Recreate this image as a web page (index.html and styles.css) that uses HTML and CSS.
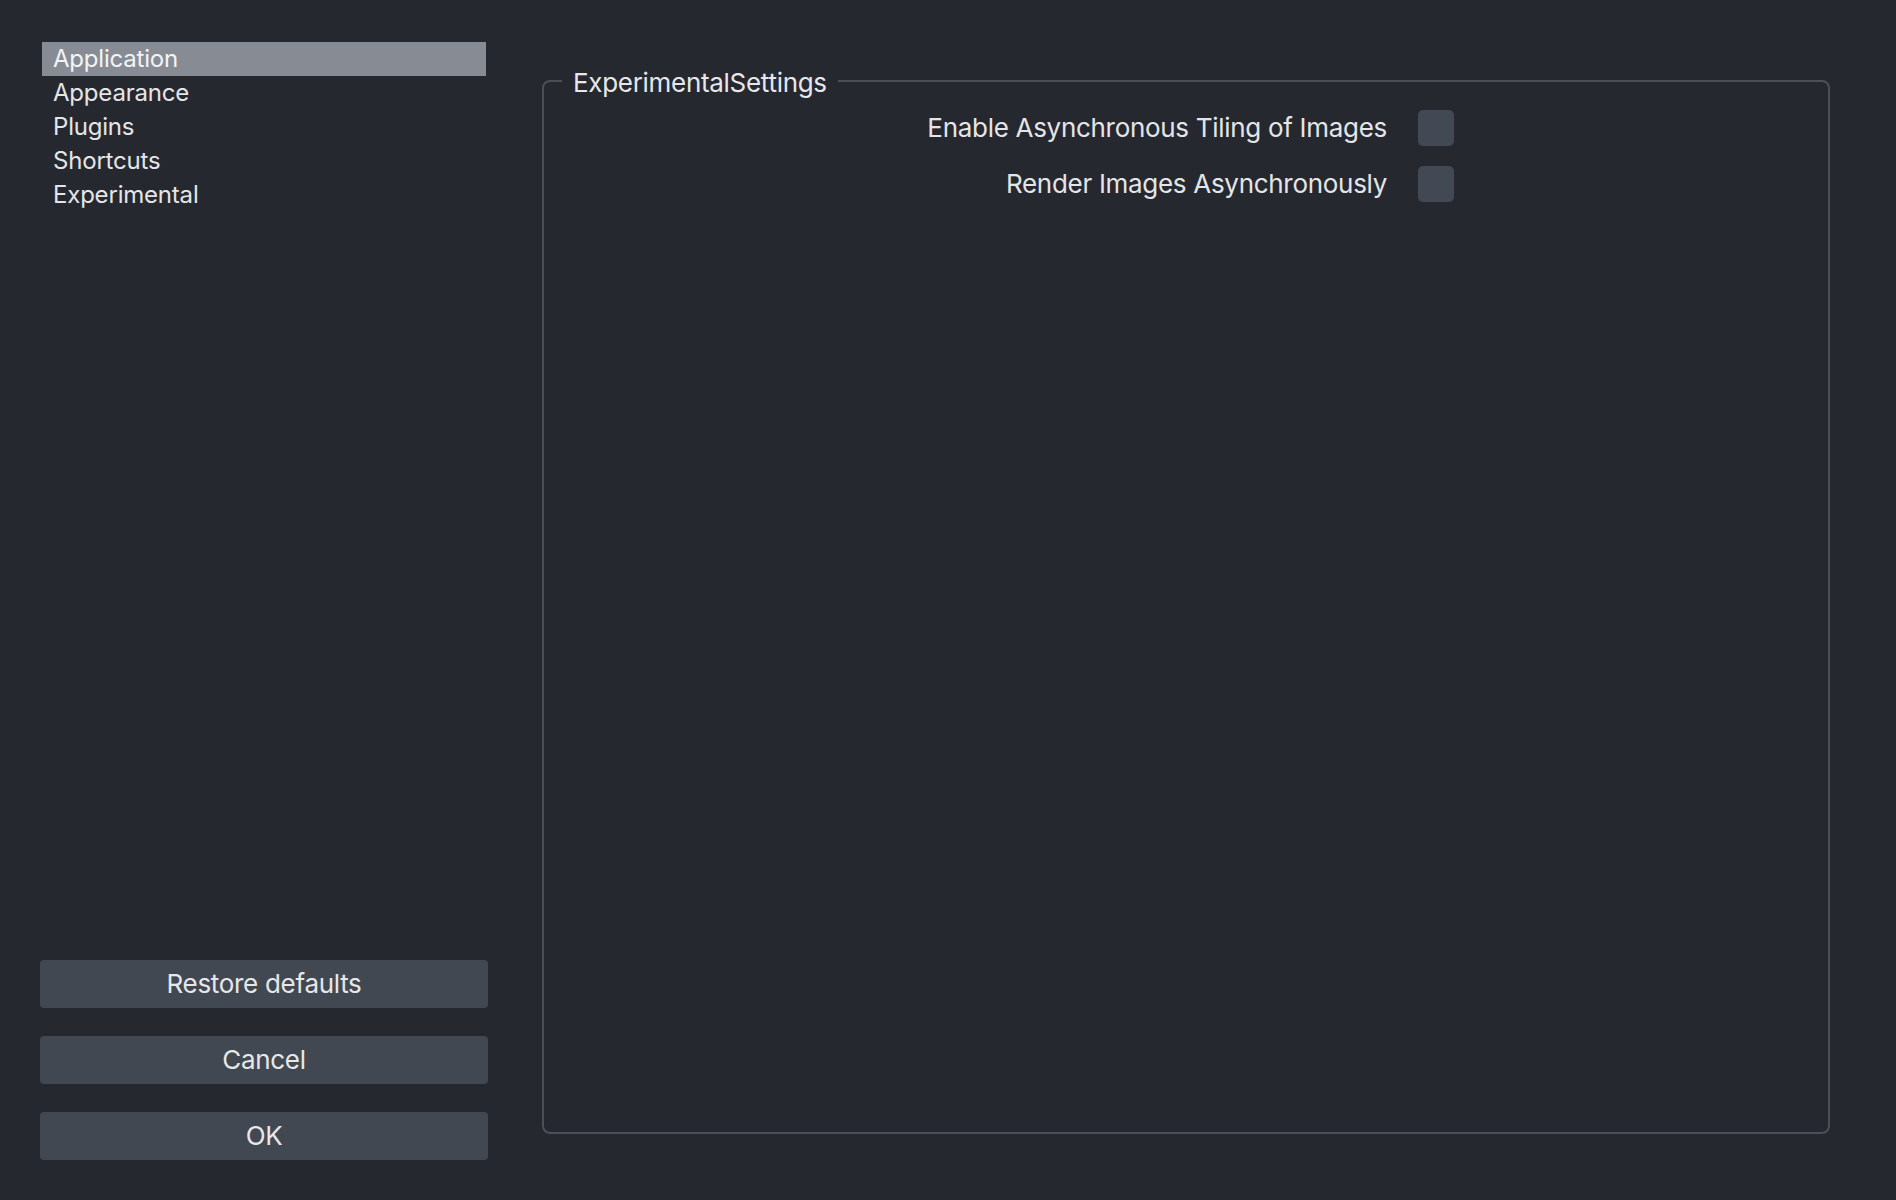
FILE: index.html
```html
<!DOCTYPE html>
<html lang="en">
<head>
<meta charset="utf-8">
<title>Preferences</title>
<link rel="stylesheet" href="styles.css">
</head>
<body>
<div class="window">
  <aside class="sidebar">
    <ul class="nav">
      <li class="nav-item selected">Application</li>
      <li class="nav-item">Appearance</li>
      <li class="nav-item">Plugins</li>
      <li class="nav-item">Shortcuts</li>
      <li class="nav-item">Experimental</li>
    </ul>
    <div class="actions">
      <button class="btn" type="button">Restore defaults</button>
      <button class="btn" type="button">Cancel</button>
      <button class="btn" type="button">OK</button>
    </div>
  </aside>
  <fieldset class="group">
    <legend class="group-title">ExperimentalSettings</legend>
    <div class="form">
      <label class="form-label" for="c1">Enable Asynchronous Tiling of Images</label>
      <span class="checkbox" id="c1"></span>
      <label class="form-label" for="c2">Render Images Asynchronously</label>
      <span class="checkbox" id="c2"></span>
    </div>
  </fieldset>
</div>
</body>
</html>
```

FILE: styles.css
```css
html, body {
  margin: 0;
  padding: 0;
  background: #262830;
}

body {
  font-family: Inter, "Noto Sans", "DejaVu Sans", sans-serif;
  font-size: 26px;
  letter-spacing: -0.3px;
  color: #e4e5e7;
}

.window {
  box-sizing: border-box;
  width: 1896px;
  height: 1200px;
  display: flex;
  padding: 42px 66px 40px 40px;
}

.sidebar {
  width: 448px;
  flex: none;
  display: flex;
  flex-direction: column;
}

.nav {
  list-style: none;
  margin: 0 2px;
  padding: 0;
  flex: 1;
  font-size: 24px;
  letter-spacing: -0.2px;
}

.nav-item {
  height: 34px;
  line-height: 34px;
  padding-left: 11px;
  white-space: nowrap;
}

.nav-item.selected {
  background: #878c94;
  color: #f2f3f4;
}

.actions {
  display: flex;
  flex-direction: column;
  gap: 28px;
}

.btn {
  height: 48px;
  border: none;
  border-radius: 4px;
  background: #424852;
  color: #e6e7e9;
  font-family: inherit;
  font-size: 26px;
  letter-spacing: -0.3px;
  line-height: 48px;
  padding: 0;
}

.group {
  flex: 1;
  min-width: 0;
  margin: 20px 0 26px 54px;
  padding: 11px 18px 0 18px;
  border: 2px solid #4a4f58;
  border-radius: 8px;
}

.group-title {
  padding: 5px 11px 0 11px;
  line-height: 32px;
  color: #e6e7e9;
}

.form {
  display: grid;
  grid-template-columns: 825px 36px;
  column-gap: 31px;
  row-gap: 20px;
  align-items: center;
}

.form-label {
  justify-self: end;
  line-height: 36px;
  white-space: nowrap;
}

.checkbox {
  width: 36px;
  height: 36px;
  border-radius: 5px;
  background: #434954;
}
```
